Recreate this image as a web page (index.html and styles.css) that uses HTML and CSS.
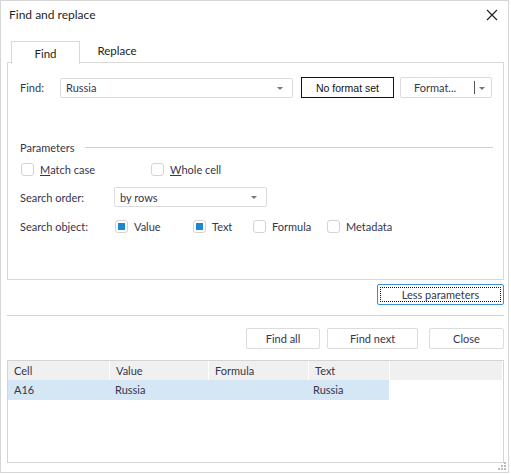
FILE: index.html
```html
<!DOCTYPE html>
<html>
<head>
  <meta charset="UTF-8" />
  <link rel="stylesheet" href="styles.css">
</head>
<body>
  <div class="window">
    <div class="titlebar">
      <span class="title">Find and replace</span>
      <svg class="close" width="12" height="12" viewBox="0 0 12 12"><path d="M1 1L11 11M11 1L1 11" stroke="#222" stroke-width="1.2"/></svg>
    </div>

    <div class="tabs">
      <div class="tab active">Find</div>
      <div class="tab">Replace</div>
    </div>

    <div class="panel">
      <div class="row find-row">
        <span class="lbl find-lbl">Find:</span>
        <div class="combo find-combo">Russia<span class="arrow"></span></div>
        <div class="btn fmt-none">No format set</div>
        <div class="btn fmt-btn">Format...<span class="split"></span><span class="arrow"></span></div>
      </div>

      <div class="row params">
        <span>Parameters</span>
        <div class="line"></div>
      </div>

      <div class="row checks">
        <label class="check w130"><span class="box"></span><u>M</u>atch case</label>
        <label class="check"><span class="box"></span><u>W</u>hole cell</label>
      </div>

      <div class="row order-row">
        <span class="lbl order-lbl">Search order:</span>
        <div class="combo order-combo">by rows<span class="arrow"></span></div>
      </div>

      <div class="row object-row">
        <span class="lbl order-lbl">Search object:</span>
        <label class="check w78"><span class="box on"></span>Value</label>
        <label class="check w60"><span class="box on"></span>Text</label>
        <label class="check w74"><span class="box"></span>Formula</label>
        <label class="check"><span class="box"></span>Metadata</label>
      </div>
    </div>

    <div class="less-row">
      <div class="btn less"><span class="focus">Less parameters</span></div>
    </div>

    <div class="sep"></div>

    <div class="actions">
      <div class="btn act w74">Find all</div>
      <div class="btn act w91">Find next</div>
      <div class="btn act w75">Close</div>
    </div>

    <div class="results">
      <div class="grid head">
        <div>Cell</div>
        <div>Value</div>
        <div>Formula</div>
        <div>Text</div>
        <div></div>
      </div>
      <div class="grid rowsel">
        <div>A16</div>
        <div>Russia</div>
        <div></div>
        <div>Russia</div>
      </div>
    </div>

    <svg class="grip" width="10" height="10" viewBox="0 0 10 10">
      <rect x="7" y="1" width="2" height="2" fill="#bbb"/>
      <rect x="4" y="4" width="2" height="2" fill="#bbb"/>
      <rect x="7" y="4" width="2" height="2" fill="#bbb"/>
      <rect x="1" y="7" width="2" height="2" fill="#bbb"/>
      <rect x="4" y="7" width="2" height="2" fill="#bbb"/>
      <rect x="7" y="7" width="2" height="2" fill="#bbb"/>
    </svg>
  </div>
</body>
</html>
```

FILE: styles.css
```css
body {
    margin: 0;
    background: #fff;
    font-family: Lato, "Open Sans", sans-serif;
    font-size: 11px;
    color: #35354d;
}

.window {
    position: relative;
    width: 509px;
    height: 473px;
    box-sizing: border-box;
    border: 1px solid #d6d6d6;
    background: #fff;
}

.titlebar {
    height: 27px;
    display: flex;
    align-items: center;
    justify-content: space-between;
    padding: 0 10px 0 8px;
}

.title {
    font-size: 12px;
    color: #1e1e1e;
}

.tabs {
    display: flex;
    margin-top: 12px;
    padding-left: 10px;
    height: 22px;
}

.tab {
    width: 66px;
    height: 21px;
    display: flex;
    align-items: center;
    justify-content: center;
    font-size: 11.5px;
    color: #222;
}

.tab.active {
    width: 67px;
    height: 22px;
    border: 1px solid #d9d9d9;
    border-bottom: none;
    background: #fff;
    position: relative;
    top: 1px;
    z-index: 1;
}

.tab + .tab {
    margin-left: 4px;
}

.panel {
    margin-left: 6px;
    width: 497px;
    height: 218px;
    box-sizing: border-box;
    border: 1px solid #d9d9d9;
    padding: 14px 10px 0 12px;
}

.row {
    display: flex;
    align-items: center;
}

.lbl {
    flex: none;
}

.find-lbl {
    width: 40px;
}

.combo {
    position: relative;
    box-sizing: border-box;
    border: 1px solid #dcdcdc;
    border-radius: 2px;
    display: flex;
    align-items: center;
    padding-left: 5px;
    color: #35354d;
}

.arrow {
    position: absolute;
    right: 9px;
    top: 50%;
    margin-top: -1px;
    border-left: 3px solid transparent;
    border-right: 3px solid transparent;
    border-top: 3px solid #777;
}

.find-row {
    height: 21px;
}

.find-combo {
    width: 233px;
    height: 20px;
}

.btn {
    box-sizing: border-box;
    border: 1px solid #dcdcdc;
    border-radius: 2px;
    display: flex;
    align-items: center;
    justify-content: center;
    height: 21px;
    color: #35354d;
    background: #fff;
}

.fmt-none {
    width: 93px;
    margin-left: 8px;
    border: 1px solid #111;
    border-radius: 0;
    font-family: "Liberation Sans", Arial, sans-serif;
    font-size: 10.5px;
    color: #111;
}

.fmt-btn {
    position: relative;
    width: 92px;
    margin-left: 6px;
    justify-content: flex-start;
    padding-left: 13px;
}

.split {
    position: absolute;
    left: 73px;
    top: 3px;
    height: 13px;
    border-left: 1px solid #555;
}

.fmt-btn .arrow {
    right: 6px;
}

.params {
    margin-top: 42px;
    height: 14px;
}

.line {
    flex: 1;
    margin-left: 10px;
    border-top: 1px solid #cfcfcf;
    margin-top: 1px;
}

.checks {
    margin-top: 8px;
    height: 14px;
}

.check {
    display: flex;
    align-items: center;
    flex: none;
}

.box {
    width: 13px;
    height: 13px;
    box-sizing: border-box;
    border: 1px solid #d4d4d4;
    border-radius: 3px;
    margin-left: 1px;
    margin-right: 6px;
    position: relative;
}

.box.on::after {
    content: "";
    position: absolute;
    left: 2px;
    top: 2px;
    width: 7px;
    height: 7px;
    background: #1f87d0;
}

.w130 { width: 130px; }
.w78 { width: 78px; }
.w60 { width: 60px; }
.w74 { width: 74px; }
.w75 { width: 75px; }
.w91 { width: 91px; }

.order-row {
    margin-top: 11px;
    height: 20px;
}

.order-lbl {
    width: 94px;
}

.order-combo {
    width: 153px;
    height: 20px;
}

.object-row {
    margin-top: 12px;
    height: 14px;
}

.less-row {
    display: flex;
    justify-content: flex-end;
    width: 503px;
    margin-top: 4px;
}

.less {
    width: 127px;
    height: 21px;
    border: 1px solid #3c8fd6;
    padding: 2px;
}

.less .focus {
    display: flex;
    align-items: center;
    justify-content: center;
    width: 100%;
    height: 100%;
    box-sizing: border-box;
    border: 1px dotted #111;
}

.sep {
    margin: 10px 0 0 6px;
    width: 497px;
    border-top: 1px solid #d2d2d2;
}

.actions {
    display: flex;
    justify-content: flex-end;
    gap: 7px;
    width: 503px;
    margin-top: 12px;
}

.act {
    height: 21px;
}

.act.w75 {
    margin-left: 4px;
}

.results {
    margin: 11px 0 0 6px;
    width: 497px;
    height: 103px;
    box-sizing: border-box;
    border: 1px solid #d4d4d4;
}

.grid {
    display: grid;
    grid-template-columns: 101px 98px 99px 80px 1fr;
    column-gap: 1px;
}

.grid div {
    padding-left: 6px;
    height: 19px;
    line-height: 19px;
}

.head {
    margin-right: 1px;
}

.head div {
    background: #f0f0f0;
}

.rowsel {
    grid-template-columns: 101px 99px 99px 81px;
    column-gap: 0;
    width: 381px;
    background: #d5e6f4;
    height: 20px;
}

.rowsel div {
    height: 20px;
    line-height: 20px;
}

.grip {
    position: absolute;
    right: 1px;
    bottom: 1px;
}
```
